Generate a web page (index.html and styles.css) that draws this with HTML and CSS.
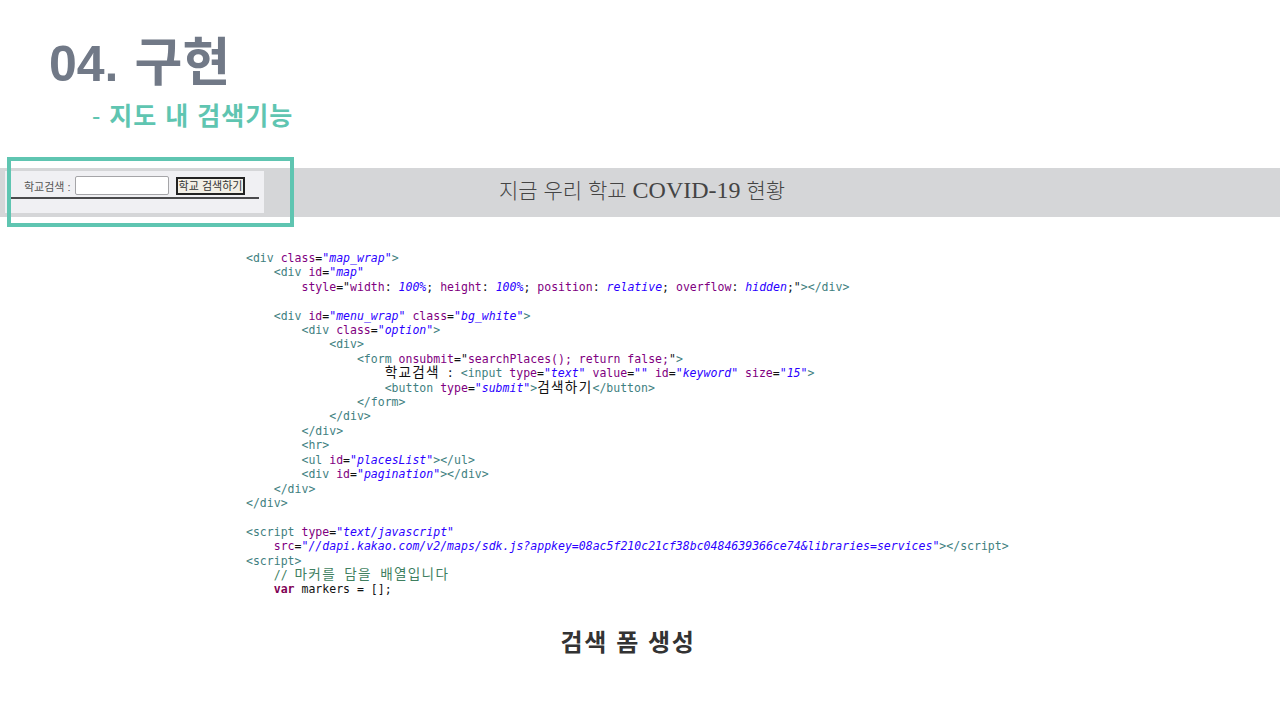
FILE: index.html
```html
<!DOCTYPE html>
<html lang="ko">
<head>
<meta charset="utf-8">
<title>04. 구현</title>
<link rel="stylesheet" href="styles.css">
</head>
<body>
<main class="slide">
  <header class="head">
    <h1 class="title"><span class="num">04.</span> <span class="ko">구현</span></h1>
    <h2 class="sub"><span class="dash">-</span> 지도 내 검색기능</h2>
  </header>
  <section class="band">
    <div class="panel">
      <div class="search">
        <label class="lbl">학교검색 :</label>
        <span class="inp"></span>
        <span class="btn">학교 검색하기</span>
      </div>
      <div class="rule"></div>
    </div>
    <div class="band-title">지금 우리 학교 <span class="lat">COVID-19</span> 현황</div>
    <div class="frame"></div>
  </section>
<pre class="code"><span class="t">&lt;div</span> <span class="a">class</span>=<span class="v">"map_wrap"</span><span class="t">&gt;</span>
    <span class="t">&lt;div</span> <span class="a">id</span>=<span class="v">"map"</span>
        <span class="a">style</span>="<span class="a">width</span>: <span class="v">100%</span>; <span class="a">height</span>: <span class="v">100%</span>; <span class="a">position</span>: <span class="v">relative</span>; <span class="a">overflow</span>: <span class="v">hidden</span>;"<span class="t">&gt;&lt;/div&gt;</span>

    <span class="t">&lt;div</span> <span class="a">id</span>=<span class="v">"menu_wrap"</span> <span class="a">class</span>=<span class="v">"bg_white"</span><span class="t">&gt;</span>
        <span class="t">&lt;div</span> <span class="a">class</span>=<span class="v">"option"</span><span class="t">&gt;</span>
            <span class="t">&lt;div&gt;</span>
                <span class="t">&lt;form</span> <span class="a">onsubmit</span>="<span class="a">searchPlaces(); return false;</span>"<span class="t">&gt;</span>
                    <span class="k">학교검색</span> : <span class="t">&lt;input</span> <span class="a">type</span>=<span class="v">"text"</span> <span class="a">value</span>=<span class="v">""</span> <span class="a">id</span>=<span class="v">"keyword"</span> <span class="a">size</span>=<span class="v">"15"</span><span class="t">&gt;</span>
                    <span class="t">&lt;button</span> <span class="a">type</span>=<span class="v">"submit"</span><span class="t">&gt;</span><span class="k">검색하기</span><span class="t">&lt;/button&gt;</span>
                <span class="t">&lt;/form&gt;</span>
            <span class="t">&lt;/div&gt;</span>
        <span class="t">&lt;/div&gt;</span>
        <span class="t">&lt;hr&gt;</span>
        <span class="t">&lt;ul</span> <span class="a">id</span>=<span class="v">"placesList"</span><span class="t">&gt;&lt;/ul&gt;</span>
        <span class="t">&lt;div</span> <span class="a">id</span>=<span class="v">"pagination"</span><span class="t">&gt;&lt;/div&gt;</span>
    <span class="t">&lt;/div&gt;</span>
<span class="t">&lt;/div&gt;</span>

<span class="t">&lt;script</span> <span class="a">type</span>=<span class="v">"text/javascript"</span>
    <span class="a">src</span>=<span class="v">"//dapi.kakao.com/v2/maps/sdk.js?appkey=08ac5f210c21cf38bc0484639366ce74&amp;libraries=services"</span><span class="t">&gt;&lt;/script&gt;</span>
<span class="t">&lt;script&gt;</span>
    <span class="c">// <span class="k">마커를 담을 배열입니다</span></span>
    <span class="w">var</span> markers = [];</pre>
  <p class="caption">검색 폼 생성</p>
</main>
</body>
</html>
```
FILE: styles.css
```css
* { box-sizing: border-box; }
html, body { margin: 0; padding: 0; background: #fff; }
.slide {
  width: 1280px;
  height: 720px;
  overflow: hidden;
  display: flex;
  flex-direction: column;
  font-family: "Liberation Sans", "Noto Sans CJK KR", sans-serif;
}
.head { height: 168px; padding: 27px 0 0 49px; }
.title {
  margin: 0;
  height: 64px;
  font-size: 50px;
  line-height: 64px;
  font-weight: 700;
  color: #717987;
  font-family: "Noto Sans CJK KR", sans-serif;
}
.num { font-family: "Liberation Sans", sans-serif; }
.ko { font-size: 52px; letter-spacing: 0.2px; margin-left: 2px; }
.sub {
  margin: 7px 0 0 43px;
  font-size: 25px;
  line-height: 36px;
  font-weight: 700;
  letter-spacing: 1px;
  color: #5fc5b1;
}
.dash { font-weight: 400; }
.band {
  position: relative;
  flex: none;
  height: 49px;
  background: #d5d6d8;
  display: flex;
  align-items: flex-start;
}
.panel {
  flex: none;
  width: 259px;
  height: 42px;
  margin: 3px 0 0 5px;
  background: #f0f0f3;
  padding: 5px 5px 0 6px;
}
.search { display: flex; align-items: center; height: 20px; }
.lbl { font-size: 11px; color: #555; margin: -1px 0 0 13px; width: 51px; white-space: nowrap; }
.inp {
  display: block;
  width: 94px;
  height: 19px;
  margin-top: -1px;
  background: #fff;
  border: 1px solid #a5a5a8;
  border-radius: 2px;
}
.btn {
  margin-left: 7px;
  width: 69px;
  height: 18px;
  background: #f2efe6;
  border: 2px solid #222;
  font-size: 11px;
  line-height: 14px;
  text-align: center;
  color: #333;
  white-space: nowrap;
}
.rule { height: 2px; margin-top: 1px; background: #4a4a4c; }
.band-title {
  position: absolute;
  left: 499px;
  top: 7px;
  font-family: "Noto Sans CJK KR", serif;
  font-weight: 300;
  font-size: 21px;
  line-height: 28px;
  color: #444;
  white-space: nowrap;
}
.lat { font-family: "Liberation Serif", serif; font-size: 24px; }
.frame {
  position: absolute;
  left: 7px;
  top: -11px;
  width: 287px;
  height: 70px;
  border: 4px solid #5fc5b1;
}
.code {
  margin: 34px 0 0 246px;
  height: 346px;
  font-family: "DejaVu Sans Mono", monospace;
  font-size: 11.53px;
  line-height: 14.41px;
  color: #111;
}
.t { color: #3f7f7f; }
.a { color: #7f007f; }
.v { color: #2a00ff; font-style: italic; }
.w { color: #7f0055; font-weight: 700; }
.c { color: #3f7f5f; }
.k {
  font-family: "Noto Sans CJK KR", sans-serif;
  font-size: 13.6px;
  font-style: normal;
  line-height: 0;
  letter-spacing: 1.3px;
  word-spacing: 3.2px;
}
.caption {
  margin: 0;
  padding-top: 29px;
  width: 1256px;
  text-align: center;
  font-size: 24px;
  line-height: 34px;
  font-weight: 700;
  color: #333;
  letter-spacing: 1.6px;
}
```
